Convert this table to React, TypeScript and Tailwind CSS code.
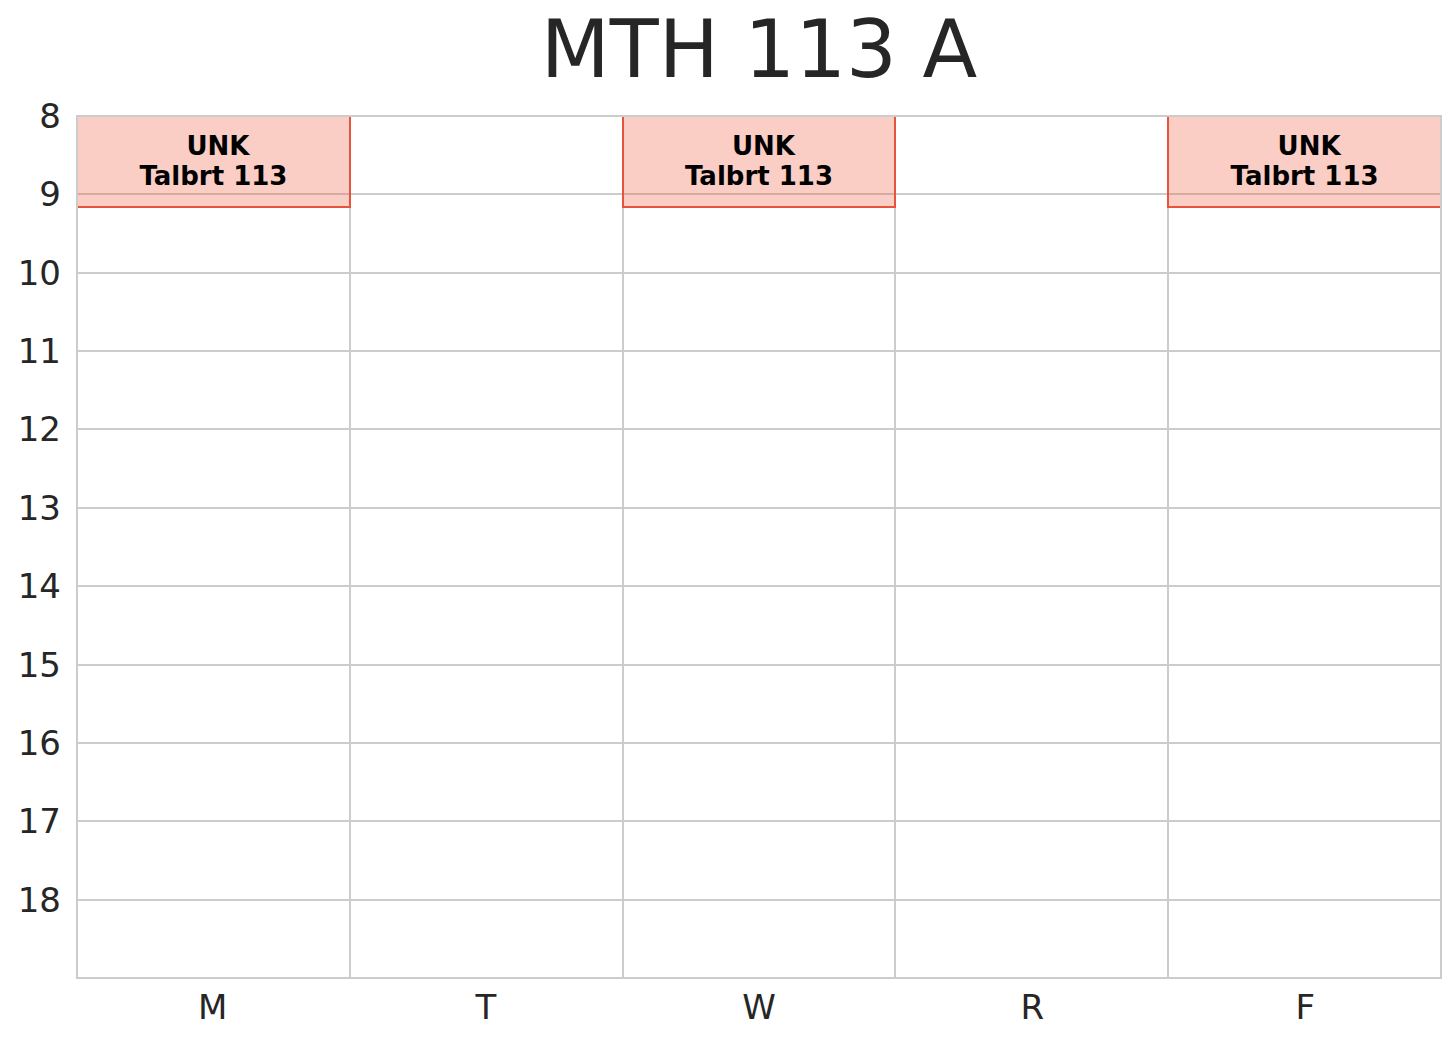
import React from 'react'

const hours = [8, 9, 10, 11, 12, 13, 14, 15, 16, 17, 18]
const days = ['M', 'T', 'W', 'R', 'F']

// classes written out in full so tailwind picks them up
const blocks = [
	{ day: 'M', left: 'left-[0px]' },
	{ day: 'W', left: 'left-[545.6px]' },
	{ day: 'F', left: 'left-[1091.2px]' },
]

function ClassBlock({ left }: { left: string }) {
	return (
		<div
			className={`absolute top-0 ${left} w-[274.8px] h-[93.4px] border-2 border-[#e8533b] bg-[#ee5a40]/30 pt-[14px] text-center text-[26px] leading-[30px] font-bold text-black`}
		>
			<div className="pl-[9px]">UNK</div>
			<div>Talbrt 113</div>
		</div>
	)
}

export default function App() {
	return (
		<div className="w-[1456px] h-[1040px] bg-white font-['DejaVu_Sans',sans-serif] text-[#262626]">
			<h1 className="ml-[76px] w-[1366px] pt-[10px] text-center text-[80px] leading-none">
				MTH 113 A
			</h1>

			<div className="flex mt-[25px]">
				<div className="w-[61px] mr-[15px] flex flex-col">
					{hours.map((h) => (
						<div key={h} className="h-[78.36px] text-right">
							<div className="-mt-[16px] text-[34px] leading-none">{h}</div>
						</div>
					))}
				</div>

				<div className="relative w-[1366px] h-[864px]">
					<div className="grid grid-cols-5 grid-rows-11 h-full border-r-2 border-b-2 border-[#cccccc]">
						{hours.map((h) =>
							days.map((d) => (
								<div
									key={`${h}-${d}`}
									className="border-t-2 border-l-2 border-[#cccccc]"
								/>
							))
						)}
					</div>

					{blocks.map((b) => (
						<ClassBlock key={b.day} left={b.left} />
					))}

					{/* axes spine sits over everything */}
					<div className="absolute inset-0 border-2 border-[#cccccc] pointer-events-none" />
				</div>
			</div>

			<div className="ml-[76px] w-[1366px] mt-[11px] grid grid-cols-5 text-center text-[34px] leading-none">
				{days.map((d) => (
					<div key={d}>{d}</div>
				))}
			</div>
		</div>
	)
}
